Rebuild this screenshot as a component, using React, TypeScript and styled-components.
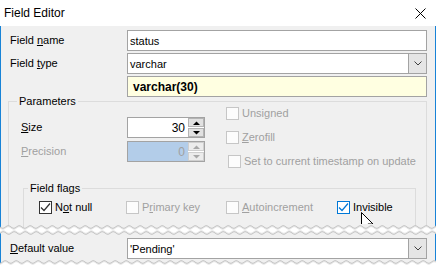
import React from 'react';
import styled, { createGlobalStyle } from 'styled-components';

const BLUE = '#1883d7';
const GROUP = '#dcdcdc';
const FACE = '#f0f0f0';
const DISABLED = '#a0a0a0';
const EDGE = '#a3a3a3';

const Global = createGlobalStyle`
  html, body { margin: 0; padding: 0; background: #fff; }
  body { font-family: "Liberation Sans", Arial, sans-serif; font-size: 11px; color: #000; }
  * { box-sizing: border-box; }
`;

const Window = styled.div`
  width: 436px;
  height: 267px;
  overflow: hidden;
  background: #fff;
`;

const TitleBar = styled.div`
  height: 26px;
  display: flex;
  align-items: center;
  justify-content: space-between;
  padding: 0 10px 0 4px;
  background: #fff;
  font-size: 12px;
`;

const TitleText = styled.span`
  line-height: 14px;
`;

const Body = styled.div`
  position: relative;
  height: 198px;
  overflow: hidden;
  background: ${FACE};
  border-left: 1px solid ${BLUE};
  border-right: 1px solid ${BLUE};
  padding-top: 4px;
`;

const BottomBody = styled.div`
  height: 24px;
  background: ${FACE};
  border-left: 1px solid ${BLUE};
  border-right: 1px solid ${BLUE};
  padding-top: 2px;
`;

const FieldRow = styled.div`
  display: grid;
  grid-template-columns: 117px 300px;
  align-items: center;
  height: 21px;
  margin: 0 0 2px 9px;
`;

const Label = styled.span<{ $disabled?: boolean }>`
  color: ${(p) => (p.$disabled ? DISABLED : '#000')};
  line-height: 13px;
  white-space: nowrap;
`;

const Key = styled.span`
  text-decoration: underline;
  text-underline-offset: 1px;
`;

const Edit = styled.div`
  height: 21px;
  display: flex;
  align-items: center;
  background: #fff;
  border: 1px solid ${EDGE};
  padding-left: 2px;
`;

const Combo = styled.div`
  height: 21px;
  display: flex;
  align-items: stretch;
  background: #fff;
  border: 1px solid ${EDGE};
`;

const ComboText = styled.span`
  flex: 1;
  display: flex;
  align-items: center;
  padding-left: 2px;
`;

const DropButton = styled.span`
  width: 18px;
  display: flex;
  align-items: center;
  justify-content: center;
  background: #e5e5e5;
  border-left: 1px solid ${EDGE};
`;

const Hint = styled.div`
  height: 21px;
  display: flex;
  align-items: center;
  background: #ffffe1;
  border: 1px solid ${EDGE};
  padding-left: 5px;
  font-size: 12px;
  font-weight: bold;
`;

const GroupBox = styled.div<{ $left: number; $width: number; $top: number }>`
  position: relative;
  margin: ${(p) => p.$top}px 0 0 ${(p) => p.$left}px;
  width: ${(p) => p.$width}px;
  border: 1px solid ${GROUP};
  padding-bottom: 40px;
`;

const Caption = styled.span<{ $x: number }>`
  position: absolute;
  top: -7px;
  left: ${(p) => p.$x}px;
  padding: 0 2px;
  line-height: 13px;
  background: ${FACE};
`;

const ParamColumns = styled.div`
  display: flex;
  align-items: flex-start;
`;

const LeftColumn = styled.div`
  margin-left: 12px;
  padding-top: 15px;
  display: flex;
  flex-direction: column;
  gap: 3px;
`;

const SpinRow = styled.div`
  display: grid;
  grid-template-columns: 106px 78px;
  align-items: center;
  height: 21px;
`;

const RightColumn = styled.div`
  margin-left: 21px;
  padding-top: 1px;
  display: flex;
  flex-direction: column;
  gap: 3px;
`;

const CheckRow = styled.label<{ $indent?: number }>`
  display: flex;
  align-items: center;
  height: 21px;
  gap: 3px;
  padding-left: ${(p) => p.$indent ?? 0}px;
`;

const Spin = styled.div<{ $disabled?: boolean }>`
  height: 21px;
  display: flex;
  background: ${(p) => (p.$disabled ? '#b3cde9' : '#fff')};
  border: 1px solid ${EDGE};
`;

const SpinValue = styled.span<{ $disabled?: boolean }>`
  flex: 1;
  display: flex;
  align-items: center;
  justify-content: flex-end;
  padding-right: 3px;
  color: ${(p) => (p.$disabled ? DISABLED : '#000')};
  font-size: 12px;
`;

const SpinButtons = styled.span`
  width: 16px;
  display: flex;
  flex-direction: column;
  gap: 1px;
  background: #fff;
`;

const SpinButton = styled.span<{ $disabled?: boolean }>`
  flex: 1;
  display: flex;
  align-items: center;
  justify-content: center;
  background: ${(p) => (p.$disabled ? '#ececec' : '#e1e1e1')};
  border: 1px solid ${(p) => (p.$disabled ? '#cfcfcf' : '#b4b4b4')};
`;

const FlagsRow = styled.div`
  display: grid;
  grid-template-columns: 87px 100px 111px auto;
  padding: 8px 0 0 15px;
`;

const Box = styled.span<{ $state: 'normal' | 'disabled' | 'hot' }>`
  width: 13px;
  height: 13px;
  flex: none;
  display: flex;
  align-items: center;
  justify-content: center;
  background: ${(p) => (p.$state === 'disabled' ? '#fcfcfc' : '#fff')};
  border: 1px solid
    ${(p) => (p.$state === 'disabled' ? '#c6c6c6' : p.$state === 'hot' ? '#0078d7' : '#333')};
`;

const Cursor = styled.svg`
  position: absolute;
  left: 360px;
  top: 186px;
`;

const TearSvg = styled.svg`
  display: block;
`;

const Chevron = () => (
  <svg width="8" height="5" viewBox="0 0 8 5">
    <polyline points="0.5,0.5 4,4 7.5,0.5" fill="none" stroke="#404040" strokeWidth="1" />
  </svg>
);

const Arrow = ({ up, disabled }: { up?: boolean; disabled?: boolean }) => (
  <svg width="7" height="4" viewBox="0 0 7 4">
    <polygon
      points={up ? '0,4 3.5,0.5 7,4' : '0,0 3.5,3.5 7,0'}
      fill={disabled ? '#a8a8a8' : '#000'}
    />
  </svg>
);

const CheckBox = ({
  state,
  checked,
  children,
  indent,
}: {
  state: 'normal' | 'disabled' | 'hot';
  checked?: boolean;
  children: React.ReactNode;
  indent?: number;
}) => (
  <CheckRow $indent={indent}>
    <Box $state={state}>
      {checked && (
        <svg width="11" height="11" viewBox="0 0 11 11">
          <polyline
            points="1,5.5 4,8.5 10,1.5"
            fill="none"
            stroke={state === 'hot' ? '#0078d7' : '#333'}
            strokeWidth="1.2"
          />
        </svg>
      )}
    </Box>
    <Label $disabled={state === 'disabled'}>{children}</Label>
  </CheckRow>
);

const W = 436;
const wave = (base: number, amp: number, period: number, phase: number) => {
  const pts: string[] = [];
  for (let x = 0; x <= W; x += 1) {
    const y = base + amp * Math.sin(((x + phase) / period) * 2 * Math.PI);
    pts.push(`${x} ${y.toFixed(2)}`);
  }
  return pts;
};
const line = (pts: string[]) => 'M' + pts.join(' L');

const TopTear = () => {
  const w1 = wave(3, 1.3, 11, 0);
  const w1s = wave(4, 1.3, 11, 0);
  const w2 = wave(9, 1.3, 11, 5);
  const w2s = wave(8, 1.3, 11, 5);
  const topFill = `M0 0 L${w1.join(' L')} L${W} 0 Z`;
  const botFill = `M0 12 L${w2.join(' L')} L${W} 12 Z`;
  return (
    <TearSvg width={W} height={12} viewBox={`0 0 ${W} 12`}>
      <defs>
        <clipPath id="tearTop">
          <path d={topFill} />
        </clipPath>
        <clipPath id="tearBot">
          <path d={botFill} />
        </clipPath>
      </defs>
      <rect width={W} height={12} fill="#fff" />
      <path d={topFill} fill={FACE} />
      <g clipPath="url(#tearTop)" strokeWidth="1">
        <line x1="0.5" y1="0" x2="0.5" y2="12" stroke={BLUE} />
        <line x1="435.5" y1="0" x2="435.5" y2="12" stroke={BLUE} />
        <line x1="8.5" y1="0" x2="8.5" y2="12" stroke={GROUP} />
        <line x1="23.5" y1="0" x2="23.5" y2="12" stroke={GROUP} />
        <line x1="415.5" y1="0" x2="415.5" y2="12" stroke={GROUP} />
        <line x1="426.5" y1="0" x2="426.5" y2="12" stroke={GROUP} />
      </g>
      <path d={line(w1s)} fill="none" stroke="#e6e6e6" strokeWidth="1" />
      <path d={line(w1)} fill="none" stroke="#c2c2c2" strokeWidth="1" />
      <path d={botFill} fill={FACE} />
      <g clipPath="url(#tearBot)" strokeWidth="1">
        <line x1="0.5" y1="0" x2="0.5" y2="12" stroke={BLUE} />
        <line x1="435.5" y1="0" x2="435.5" y2="12" stroke={BLUE} />
      </g>
      <path d={line(w2s)} fill="none" stroke="#e6e6e6" strokeWidth="1" />
      <path d={line(w2)} fill="none" stroke="#c2c2c2" strokeWidth="1" />
    </TearSvg>
  );
};

const BottomTear = () => {
  const w = wave(2, 1.3, 11, 3);
  const ws = wave(3, 1.3, 11, 3);
  const fill = `M0 0 L${w.join(' L')} L${W} 0 Z`;
  return (
    <TearSvg width={W} height={7} viewBox={`0 0 ${W} 7`}>
      <defs>
        <clipPath id="tearEnd">
          <path d={fill} />
        </clipPath>
      </defs>
      <rect width={W} height={7} fill="#fff" />
      <path d={fill} fill={FACE} />
      <g clipPath="url(#tearEnd)">
        <line x1="0.5" y1="0" x2="0.5" y2="7" stroke={BLUE} />
        <line x1="435.5" y1="0" x2="435.5" y2="7" stroke={BLUE} />
      </g>
      <path d={line(ws)} fill="none" stroke="#e6e6e6" strokeWidth="1" />
      <path d={line(w)} fill="none" stroke="#c2c2c2" strokeWidth="1" />
    </TearSvg>
  );
};

export default function App() {
  return (
    <>
      <Global />
      <Window>
        <TitleBar>
          <TitleText>Field Editor</TitleText>
          <svg width="11" height="11" viewBox="0 0 11 11">
            <path d="M0.5 0.5 L10.5 10.5 M10.5 0.5 L0.5 10.5" stroke="#000" strokeWidth="1" />
          </svg>
        </TitleBar>
        <Body>
          <FieldRow>
            <Label>
              Field <Key>n</Key>ame
            </Label>
            <Edit>status</Edit>
          </FieldRow>
          <FieldRow>
            <Label>
              Field <Key>t</Key>ype
            </Label>
            <Combo>
              <ComboText>varchar</ComboText>
              <DropButton>
                <Chevron />
              </DropButton>
            </Combo>
          </FieldRow>
          <FieldRow>
            <span />
            <Hint>varchar(30)</Hint>
          </FieldRow>
          <GroupBox $left={7} $width={419} $top={4}>
            <Caption $x={8}>Parameters</Caption>
            <ParamColumns>
              <LeftColumn>
                <SpinRow>
                  <Label>
                    <Key>S</Key>ize
                  </Label>
                  <Spin>
                    <SpinValue>30</SpinValue>
                    <SpinButtons>
                      <SpinButton>
                        <Arrow up />
                      </SpinButton>
                      <SpinButton>
                        <Arrow />
                      </SpinButton>
                    </SpinButtons>
                  </Spin>
                </SpinRow>
                <SpinRow>
                  <Label $disabled>
                    <Key>P</Key>recision
                  </Label>
                  <Spin $disabled>
                    <SpinValue $disabled>0</SpinValue>
                    <SpinButtons>
                      <SpinButton $disabled>
                        <Arrow up disabled />
                      </SpinButton>
                      <SpinButton $disabled>
                        <Arrow disabled />
                      </SpinButton>
                    </SpinButtons>
                  </Spin>
                </SpinRow>
              </LeftColumn>
              <RightColumn>
                <CheckBox state="disabled">
                  Unsi<Key>g</Key>ned
                </CheckBox>
                <CheckBox state="disabled">
                  <Key>Z</Key>erofill
                </CheckBox>
                <CheckBox state="disabled" indent={2}>
                  Set to current timestamp on update
                </CheckBox>
              </RightColumn>
            </ParamColumns>
            <GroupBox $left={14} $width={393} $top={16}>
              <Caption $x={4}>Field flags</Caption>
              <FlagsRow>
                <CheckBox state="normal" checked>
                  N<Key>o</Key>t null
                </CheckBox>
                <CheckBox state="disabled">
                  P<Key>r</Key>imary key
                </CheckBox>
                <CheckBox state="disabled">
                  <Key>A</Key>utoincrement
                </CheckBox>
                <CheckBox state="hot" checked>
                  Invisible
                </CheckBox>
              </FlagsRow>
            </GroupBox>
          </GroupBox>
          <Cursor width="13" height="20" viewBox="0 0 13 20">
            <path
              d="M0.5 0.5 L0.5 16.5 L4.5 12.8 L7 18.5 L9.3 17.5 L6.9 12 L12 12 Z"
              fill="#fff"
              stroke="#000"
              strokeWidth="1"
              strokeLinejoin="miter"
            />
          </Cursor>
        </Body>
        <TopTear />
        <BottomBody>
          <FieldRow>
            <Label>
              <Key>D</Key>efault value
            </Label>
            <Combo>
              <ComboText>'Pending'</ComboText>
              <DropButton>
                <Chevron />
              </DropButton>
            </Combo>
          </FieldRow>
        </BottomBody>
        <BottomTear />
      </Window>
    </>
  );
}
